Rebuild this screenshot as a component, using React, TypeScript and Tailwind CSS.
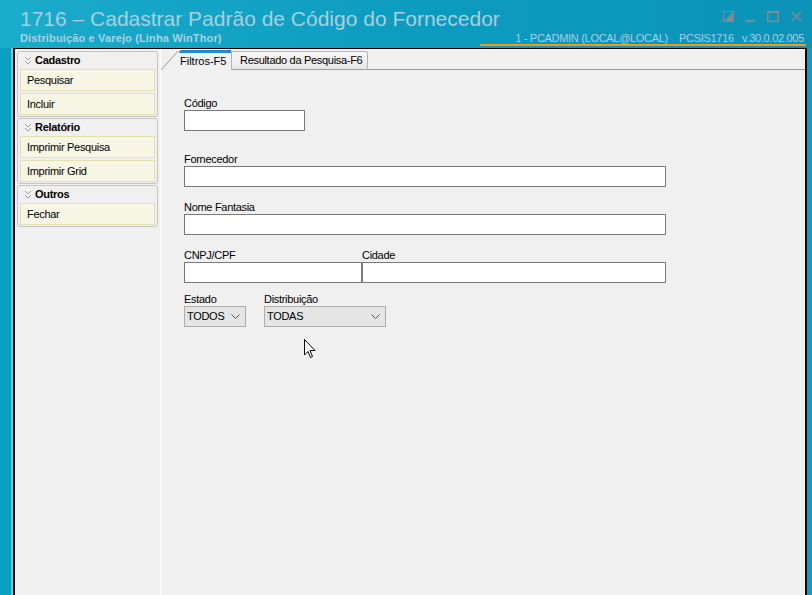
import React from 'react';

const font = { fontFamily: '"Liberation Sans", Arial, sans-serif' };

const groups = [
  { title: 'Cadastro', items: ['Pesquisar', 'Incluir'] },
  { title: 'Relatório', items: ['Imprimir Pesquisa', 'Imprimir Grid'] },
  { title: 'Outros', items: ['Fechar'] },
];

const Chevrons: React.FC = () => (
  <svg width="8" height="9" viewBox="0 0 8 9" className="shrink-0">
    <path d="M1 1 L4 4 L7 1 M1 5 L4 8 L7 5" fill="none" stroke="#a0a0a0" strokeWidth="1" />
  </svg>
);

const Field: React.FC<{ label: string; w: string; mt: string }> = ({ label, w, mt }) => (
  <div className={mt}>
    <div className="h-[14px] text-[11px] leading-[14px] text-black">{label}</div>
    <div className={`${w} h-[21px] border border-[#7a7a7a] bg-white`} />
  </div>
);

const Select: React.FC<{ label: string; value: string; w: string }> = ({ label, value, w }) => (
  <div>
    <div className="h-[14px] text-[11px] leading-[14px] text-black">{label}</div>
    <div className={`${w} flex h-[21px] items-center justify-between border border-[#adadad] bg-[#e5e5e5] pl-[2px] pr-[5px] text-[11px] text-black`}>
      <span>{value}</span>
      <svg width="9" height="5" viewBox="0 0 9 5">
        <path d="M0.5 0.5 L4.5 4.5 L8.5 0.5" fill="none" stroke="#555" strokeWidth="1" />
      </svg>
    </div>
  </div>
);

export default function App() {
  return (
    <div
      className="relative flex h-[595px] w-[812px] flex-col overflow-hidden bg-[#0a9fc0]"
      style={font}
    >
      {/* title bar */}
      <div className="flex h-[48px] shrink-0 flex-col bg-gradient-to-r from-[#1aaccb] via-[#0c9cc0] to-[#0b93b8] pl-[20px] pr-[6px]">
        <div className="flex h-[32px] items-start justify-between whitespace-nowrap pt-[6px]">
          <div className="text-[21px] leading-[26px] text-[#a9cfdf]">1716 – Cadastrar Padrão de Código do Fornecedor</div>
          <div className="mr-[4px] mt-[5px] flex items-center gap-[12px]">
            <svg width="11" height="11" viewBox="0 0 11 11">
              <rect x="0.5" y="0.5" width="10" height="10" fill="none" stroke="#7e8b90" />
              <path d="M11 0 L11 11 L0 11 Z" fill="#7e8b90" />
            </svg>
            <svg width="9" height="11" viewBox="0 0 9 11">
              <rect x="0" y="9" width="9" height="2" fill="#7e8b90" />
            </svg>
            <svg width="12" height="11" viewBox="0 0 12 11">
              <rect x="0.75" y="0.75" width="10.5" height="9.5" fill="none" stroke="#7e8b90" strokeWidth="1.5" />
              <rect x="0" y="0" width="12" height="2" fill="#7e8b90" />
            </svg>
            <svg width="11" height="11" viewBox="0 0 11 11">
              <path d="M1 1 L10 10 M10 1 L1 10" stroke="#7e8b90" strokeWidth="1.6" />
            </svg>
          </div>
        </div>
        <div className="flex items-start justify-between whitespace-nowrap">
          <div className="text-[11px] font-bold leading-[12px] tracking-[0.15px] text-[#a4d3e4]">Distribuição e Varejo (Linha WinThor)</div>
          <div className="w-[326px] border-b-2 border-[#f09a1c] pr-[2px] text-right text-[11px] leading-[12px] tracking-[-0.3px] text-[#a8cfe0]">
            1 - PCADMIN (LOCAL@LOCAL)&nbsp;&nbsp;&nbsp; PCSIS1716&nbsp;&nbsp; v.30.0.02.005
          </div>
        </div>
      </div>

      {/* window body */}
      <div className="ml-[11px] mr-[5px] flex min-h-0 flex-1 border-l-2 border-[#5fcde6]">
        <div className="flex flex-1 border-l-2 border-r-2 border-t border-black bg-[#f0f0f0] tracking-[-0.3px]">
          {/* sidebar */}
          <div className="flex w-[145px] shrink-0 flex-col gap-[1px] pl-[2px] pr-[2px] pt-[2px]">
            {groups.map((g) => (
              <div key={g.title} className="rounded-[3px] border border-[#c4c4c4] px-[2px] pb-[1px]">
                <div className="flex h-[17px] items-center gap-[3px] pl-[4px] text-[11px] font-bold text-black">
                  <Chevrons />
                  <span>{g.title}</span>
                </div>
                <div className="flex flex-col gap-[2px]">
                  {g.items.map((it) => (
                    <div
                      key={it}
                      className="flex h-[22px] items-center border border-[#e3deb4] bg-[#f7f5e4] pl-[6px] text-[11px] text-black"
                    >
                      {it}
                    </div>
                  ))}
                </div>
              </div>
            ))}
          </div>

          {/* divider */}
          <div className="w-[1px] shrink-0 bg-white" />

          {/* main */}
          <div className="flex flex-1 flex-col">
            {/* tabs */}
            <div className="flex h-[21px] items-end whitespace-nowrap pt-[1px]">
              <svg width="18" height="20" viewBox="0 0 18 20" className="shrink-0">
                <path d="M0 20 L17 1" stroke="#9a9a9a" strokeWidth="1" />
              </svg>
              <div className="flex h-[20px] w-[52px] shrink-0 flex-col">
                <div className="h-[3px] rounded-tl-[3px] bg-[#1b8ad8]" />
                <div className="flex flex-1 items-center pl-[1px] text-[11px] tracking-normal text-black">Filtros-F5</div>
              </div>
              <div className="flex h-[19px] w-[137px] shrink-0 items-center rounded-tr-[3px] border border-[#b5b5b5] border-b-[#9a9a9a] bg-gradient-to-b from-[#f6f6f6] to-[#e8e8e8] pl-[8px] text-[11px] text-black">
                Resultado da Pesquisa-F6
              </div>
              <div className="h-[1px] flex-1 bg-[#9a9a9a]" />
            </div>

            {/* form */}
            <div className="pl-[23px]">
              <Field label="Código" w="w-[121px]" mt="mt-[26px]" />
              <Field label="Fornecedor" w="w-[482px]" mt="mt-[21px]" />
              <Field label="Nome Fantasia" w="w-[482px]" mt="mt-[13px]" />
              <div className="mt-[13px] flex">
                <Field label="CNPJ/CPF" w="w-[178px]" mt="" />
                <Field label="Cidade" w="w-[304px]" mt="" />
              </div>
              <div className="mt-[9px] flex gap-[18px]">
                <Select label="Estado" value="TODOS" w="w-[62px]" />
                <Select label="Distribuição" value="TODAS" w="w-[122px]" />
              </div>
            </div>
          </div>
        </div>
      </div>

      {/* mouse cursor */}
      <svg className="absolute left-[304px] top-[339px]" width="13" height="20" viewBox="0 0 13 20">
        <path d="M0.5 0.5 L0.5 16 L4 12.5 L6.5 18.5 L8.5 17.5 L6 11.5 L11 11.5 Z" fill="white" stroke="black" strokeWidth="1" />
      </svg>
    </div>
  );
}
